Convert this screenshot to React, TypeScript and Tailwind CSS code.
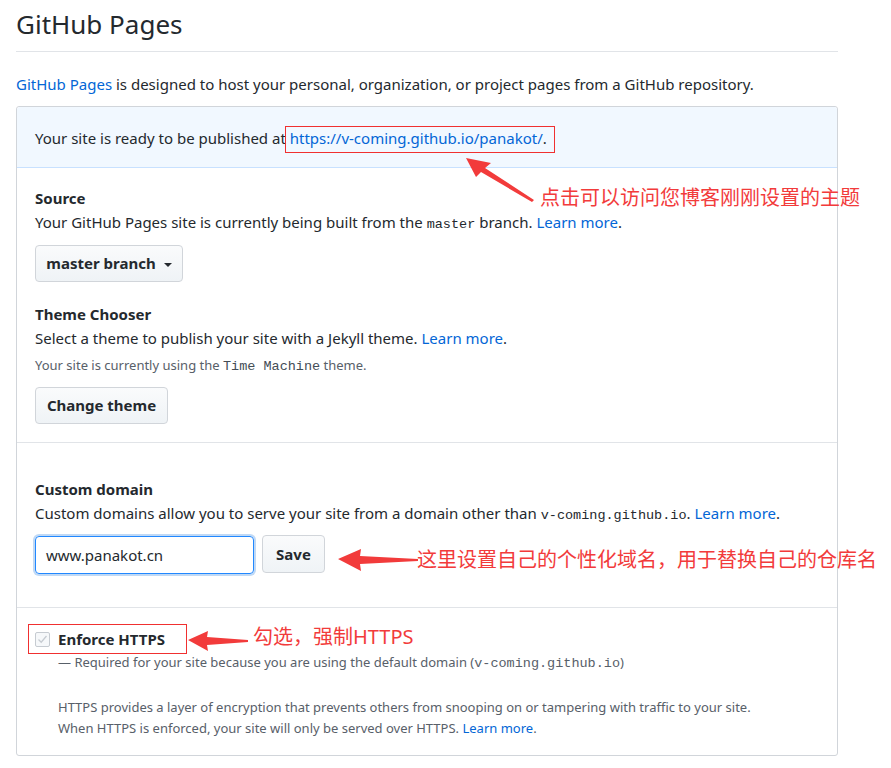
export default function App() {
  const font = { fontFamily: '"Noto Sans", "Noto Sans CJK SC", sans-serif' };
  const mono = "font-['Liberation_Mono',monospace] text-[13.5px]";
  const btn = 'font-bold rounded-[4px] border border-[#d1d5da] bg-gradient-to-b from-[#fafbfc] to-[#eff3f6]';
  return (
    <div className="relative w-[891px] h-[768px] bg-white text-[#24292e]" style={font}>
      <div className="w-[822px] ml-[16px]">
        <h1 className="text-[26px] leading-[34px] pt-[7px] pb-[10px] border-b border-[#e1e4e8]">GitHub Pages</h1>
        <p className="text-[15px] leading-[22px] mt-[21px]">
          <span className="text-[#0366d6]">GitHub Pages</span> is designed to host your personal, organization, or project pages from a GitHub repository.
        </p>

        <div className="mt-[11px] border border-[#d1d5da] rounded-[3px] text-[15px]">
          <div className="h-[61px] flex items-center px-[18px] bg-[#f1f8ff] border-b border-[#c8e1ff] rounded-t-[3px]">
            <span className="pt-[2px] whitespace-pre">Your site is ready to be published at </span>
            <span className="text-[#0366d6] pt-[2px]">https://v-coming.github.io/panakot/</span>
            <span className="pt-[2px]">.</span>
          </div>

          <div className="px-[18px] pt-[18px] pb-[18px] border-b border-[#e1e4e8]">
            <h3 className="font-bold leading-[24px]">Source</h3>
            <p className="leading-[24px]">
              Your GitHub Pages site is currently being built from the <code className={mono}>master</code> branch. <span className="text-[#0366d6]">Learn more</span>.
            </p>
            <button className={`mt-[8px] h-[37px] w-[148px] flex items-center justify-center gap-[8px] ${btn}`}>
              master branch
              <span className="w-0 h-0 border-l-[4px] border-r-[4px] border-t-[4px] border-l-transparent border-r-transparent border-t-[#24292e] mt-[2px]" />
            </button>

            <h3 className="font-bold leading-[24px] mt-[20px]">Theme Chooser</h3>
            <p className="leading-[24px]">
              Select a theme to publish your site with a Jekyll theme. <span className="text-[#0366d6]">Learn more</span>.
            </p>
            <p className="text-[13px] leading-[30px] text-[#586069]">
              Your site is currently using the <code className={`${mono} text-[#444d56]`}>Time Machine</code> theme.
            </p>
            <button className={`mt-[5px] h-[37px] w-[133px] flex items-center justify-center ${btn}`}>
              Change theme
            </button>
          </div>

          <div className="px-[18px] pt-[34px] pb-[33px] border-b border-[#e1e4e8]">
            <h3 className="font-bold leading-[24px]">Custom domain</h3>
            <p className="leading-[24px]">
              Custom domains allow you to serve your site from a domain other than <code className={mono}>v-coming.github.io</code>. <span className="text-[#0366d6]">Learn more</span>.
            </p>
            <div className="mt-[8px] flex items-center gap-[8px]">
              <div className="w-[219px] h-[38px] rounded-[4px] border border-[#2188ff] shadow-[0_0_0_2px_rgba(3,102,214,0.25)] flex items-center px-[10px]">
                www.panakot.cn
              </div>
              <button className={`h-[38px] w-[63px] -mt-[2px] ${btn}`}>
                Save
              </button>
            </div>
          </div>

          <div className="px-[18px] pt-[19px] pb-[16px]">
            <div className="flex items-center gap-[8px] h-[24px]">
              <span className="w-[15px] h-[15px] border border-[#c6cbd1] bg-[#f6f8fa] rounded-[2px] flex items-center justify-center">
                <svg width="11" height="11" viewBox="0 0 11 11"><path d="M1.5 5.5 L4.2 8.2 L9.5 2" fill="none" stroke="#c6cbd1" strokeWidth="1.3" /></svg>
              </span>
              <span className="font-bold">Enforce HTTPS</span>
            </div>
            <p className="pl-[23px] text-[13px] leading-[22px] text-[#586069]">
              — Required for your site because you are using the default domain (<code className={mono}>v-coming.github.io</code>)
            </p>
            <p className="pl-[23px] mt-[22px] text-[13px] leading-[21px] text-[#586069]">
              HTTPS provides a layer of encryption that prevents others from snooping on or tampering with traffic to your site.<br />
              When HTTPS is enforced, your site will only be served over HTTPS. <span className="text-[#0366d6]">Learn more</span>.
            </p>
          </div>
        </div>
      </div>

      {/* annotations */}
      <div className="absolute left-[285px] top-[126px] w-[270px] h-[27px] border border-[#f03030]" />
      <div className="absolute left-[28px] top-[624px] w-[159px] h-[30px] border border-[#f03030]" />

      <svg className="absolute left-0 top-0" width="891" height="768" viewBox="0 0 891 768">
        <path d="M466 158 L491 163 L485 168 L534 200 L532 202 L481 172 L476 177 Z" fill="#f23b3b" />
        <path d="M338 559 L361 549 L360 556 L418 559 L418 561 L360 564 L361 571 Z" fill="#f23b3b" />
        <path d="M188 640 L208 631 L207 637 L248 640 L248 642 L207 645 L208 651 Z" fill="#f23b3b" />
      </svg>

      <div className="absolute left-[540px] top-[186px] text-[20px] leading-[24px] text-[#f23b3b]">点击可以访问您博客刚刚设置的主题</div>
      <div className="absolute left-[417px] top-[547px] text-[20px] leading-[26px] text-[#f23b3b]">这里设置自己的个性化域名，用于替换自己的仓库名</div>
      <div className="absolute left-[253px] top-[624px] text-[20px] leading-[26px] text-[#f23b3b]">勾选，强制HTTPS</div>
    </div>
  );
}
